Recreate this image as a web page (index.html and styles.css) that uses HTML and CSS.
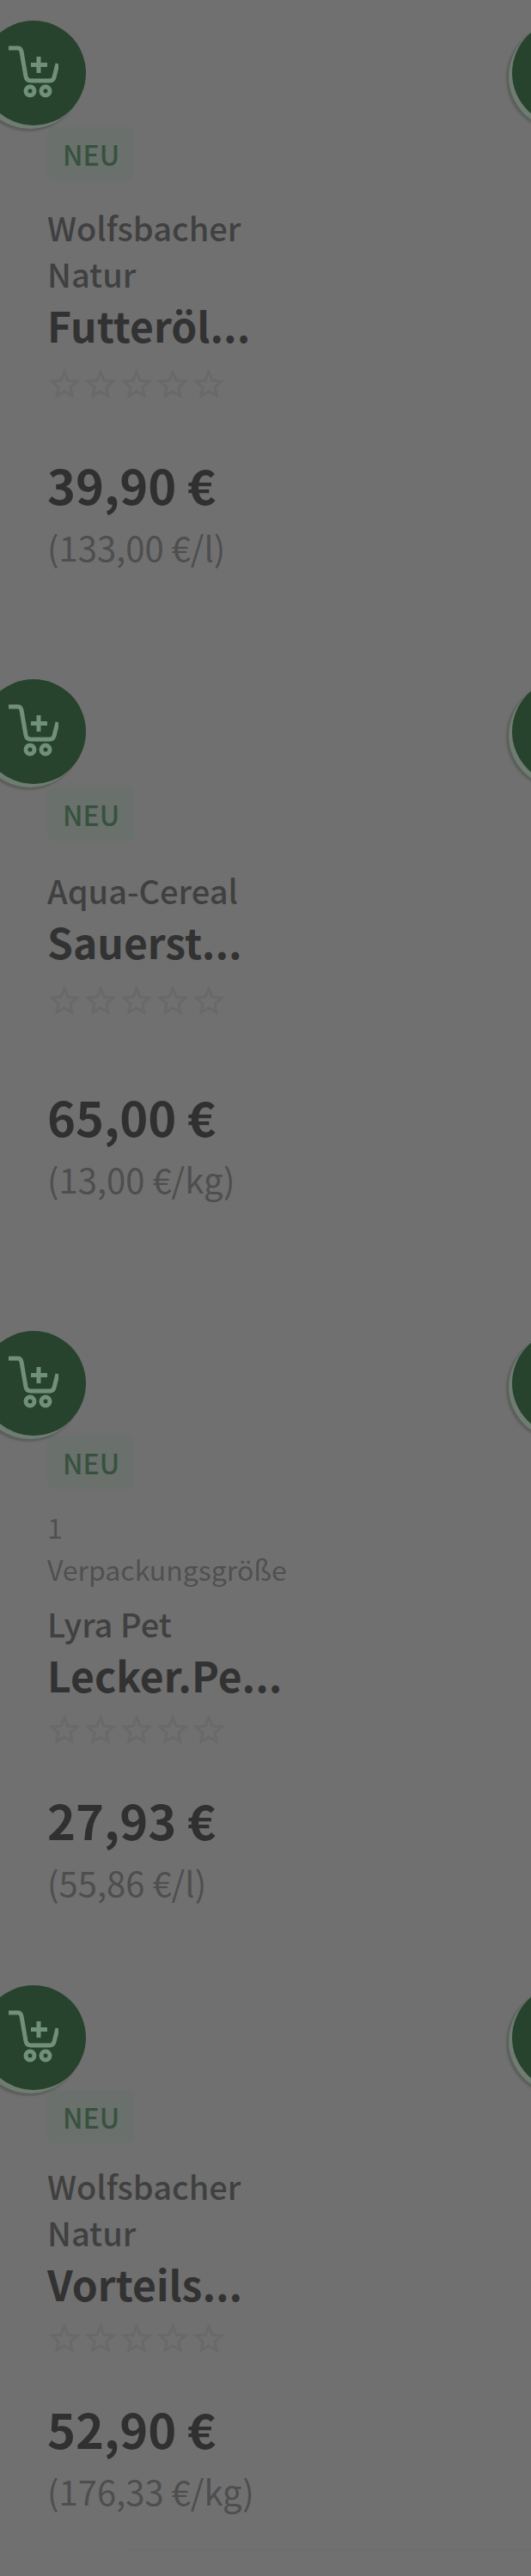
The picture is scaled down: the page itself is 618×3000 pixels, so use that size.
FILE: index.html
```
<!DOCTYPE html>
<html lang="de">
<head>
    <meta charset="UTF-8">
    <meta name="viewport" content="width=device-width, initial-scale=1.0">
    <title>Neuheiten</title>
    <link rel="stylesheet" href="styles.css">
</head>
<body>

    <svg class="sprite" aria-hidden="true">
        <symbol id="cart" viewBox="0 0 60 62">
            <path d="M2 4h11q3 0 4 4l5 29q1 5 6 5h22q4 0 5-4l4-16" />
            <path d="M37 14v19M28 23.500h19" />
            <circle cx="27" cy="54" r="5" />
            <circle cx="45" cy="54" r="5" />
        </symbol>
        <symbol id="stars" viewBox="0 0 204 34">
            <path id="star" d="M18 3l4 10 11 1-8 7 2 10-9-5-9 5 2-10-8-7 11-1z" />
            <use href="#star" x="42" />
            <use href="#star" x="84" />
            <use href="#star" x="126" />
            <use href="#star" x="168" />
        </symbol>
    </svg>

    <main class="products">
        <article class="product product-oil">
            <button class="cart-btn" aria-label="In den Warenkorb"><svg><use href="#cart" /></svg></button>
            <button class="cart-btn cart-btn-next" aria-label="In den Warenkorb"><svg><use href="#cart" /></svg></button>
            <span class="badge">NEU</span>
            <div class="info">
                <p class="brand">Wolfsbacher Natur</p>
                <h2 class="title">Futteröl...</h2>
            </div>
            <svg class="rating"><use href="#stars" /></svg>
            <p class="price">39,90 €</p>
            <p class="unit">(133,00 €/l)</p>
        </article>

        <article class="product product-cereal">
            <button class="cart-btn" aria-label="In den Warenkorb"><svg><use href="#cart" /></svg></button>
            <button class="cart-btn cart-btn-next" aria-label="In den Warenkorb"><svg><use href="#cart" /></svg></button>
            <span class="badge">NEU</span>
            <div class="info">
                <p class="brand">Aqua-Cereal</p>
                <h2 class="title">Sauerst...</h2>
            </div>
            <svg class="rating"><use href="#stars" /></svg>
            <p class="price">65,00 €</p>
            <p class="unit">(13,00 €/kg)</p>
        </article>

        <article class="product product-pack">
            <button class="cart-btn" aria-label="In den Warenkorb"><svg><use href="#cart" /></svg></button>
            <button class="cart-btn cart-btn-next" aria-label="In den Warenkorb"><svg><use href="#cart" /></svg></button>
            <span class="badge">NEU</span>
            <div class="info">
                <p class="pack">1 Verpackungsgröße</p>
                <p class="brand">Lyra Pet</p>
                <h2 class="title">Lecker.Pe...</h2>
            </div>
            <svg class="rating"><use href="#stars" /></svg>
            <p class="price">27,93 €</p>
            <p class="unit">(55,86 €/l)</p>
        </article>

        <article class="product product-set">
            <button class="cart-btn" aria-label="In den Warenkorb"><svg><use href="#cart" /></svg></button>
            <button class="cart-btn cart-btn-next" aria-label="In den Warenkorb"><svg><use href="#cart" /></svg></button>
            <span class="badge">NEU</span>
            <div class="info">
                <p class="brand">Wolfsbacher Natur</p>
                <h2 class="title">Vorteils...</h2>
            </div>
            <svg class="rating"><use href="#stars" /></svg>
            <p class="price">52,90 €</p>
            <p class="unit">(176,33 €/kg)</p>
        </article>
    </main>
    <hr class="divider">

</body>
</html>
```
FILE: styles.css
```
* {
    box-sizing: border-box;
}
body {
    margin: 0;
    background: #707070;
    color: #404040;
    font-family: "Noto Sans CJK SC", "Noto Sans", sans-serif;
    font-size: 40px;
    line-height: 54px;
    overflow-x: hidden;
}
p, h2 {
    margin: 0;
}
.sprite {
    position: absolute;
    width: 0;
    height: 0;
}
.products {
    padding-top: 24px;
}
.product {
    position: relative;
    display: flex;
    flex-direction: column;
    align-items: flex-start;
    padding: 124px 24px 0 55px;
    overflow-x: clip;
}
.cart-btn {
    position: absolute;
    top: 0;
    left: -22px;
    width: 122px;
    height: 122px;
    padding: 0;
    border: none;
    border-radius: 50%;
    background: #27432d;
    box-shadow: -4px 4px 0 0 #6f7c72, -6px 6px 2px 1px #5c5f5c;
    cursor: pointer;
}
.cart-btn svg {
    position: absolute;
    left: 30px;
    top: 27px;
    width: 60px;
    height: 64px;
    fill: none;
    stroke: #70907a;
    stroke-width: 5px;
}
.cart-btn-next {
    left: calc(100% - 22px);
}
.badge {
    padding: 0 18px;
    border-radius: 8px;
    background: #6a706b;
    color: #36523f;
    font-size: 32px;
    font-weight: 500;
    line-height: 62px;
}
.info {
    width: 240px;
    margin-top: 28px;
}
.pack {
    margin-bottom: 12px;
    color: #505050;
    font-size: 32px;
    line-height: 49px;
}
.brand {
    font-size: 38px;
    font-weight: 500;
}
.title {
    color: #323232;
    font-size: 48px;
    font-weight: 700;
    line-height: 64px;
    white-space: nowrap;
}
.rating {
    width: 204px;
    height: 34px;
    margin: 20px 0 60px 2px;
    fill: none;
    stroke: #696969;
    stroke-width: 3px;
}
.price {
    margin-bottom: 6px;
    color: #303030;
    font-size: 56px;
    font-weight: 700;
    line-height: 80px;
}
.unit {
    color: #4e4e4e;
}
.product-oil {
    padding-bottom: 127px;
}
.product-cereal {
    padding-top: 126px;
    padding-bottom: 150px;
}
.product-cereal .info {
    margin-top: 31px;
}
.product-cereal .rating {
    margin-bottom: 78px;
}
.product-pack {
    padding-top: 122px;
    padding-bottom: 93px;
}
.product-pack .info {
    margin-top: 20px;
}
.product-pack .rating,
.product-set .rating {
    margin-top: 15px;
    margin-bottom: 48px;
}
.product-set {
    padding-top: 122px;
    padding-bottom: 41px;
}
.product-set .info {
    margin-top: 23px;
}
.divider {
    height: 1px;
    margin: 0 0 0 145px;
    border: none;
    background: #6c6c6c;
}
```
